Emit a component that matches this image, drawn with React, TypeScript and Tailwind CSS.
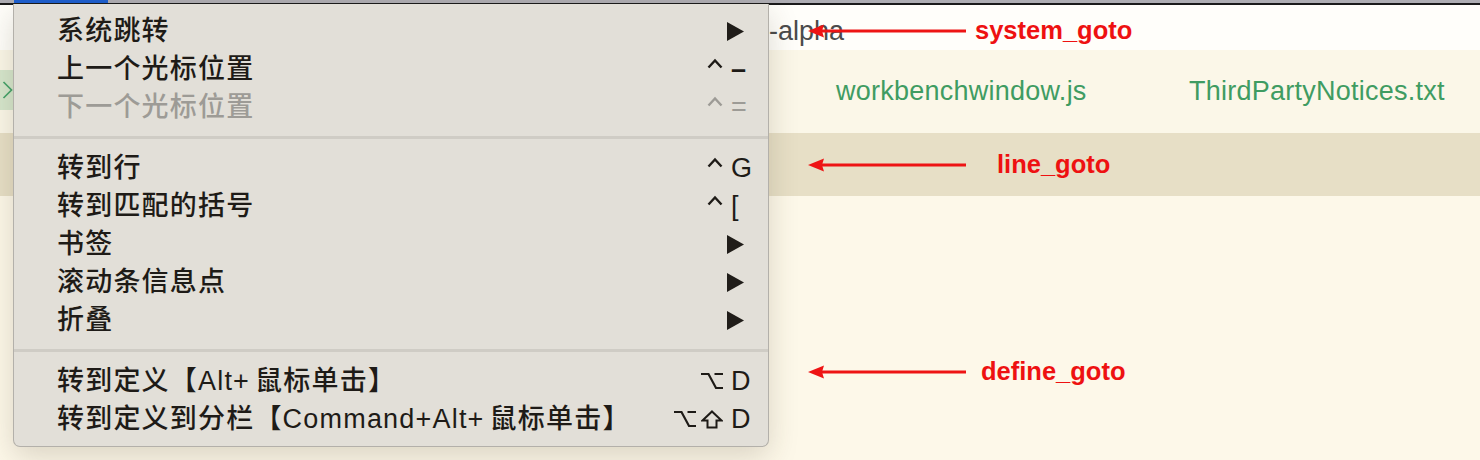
import React from 'react'

type Item = {
  label: string
  disabled?: boolean
  submenu?: boolean
  mods?: ('ctrl' | 'opt' | 'shift')[]
  keyChar?: string
}

const sections: Item[][] = [
  [
    { label: '系统跳转', submenu: true },
    { label: '上一个光标位置', mods: ['ctrl'], keyChar: '–' },
    { label: '下一个光标位置', mods: ['ctrl'], keyChar: '=', disabled: true },
  ],
  [
    { label: '转到行', mods: ['ctrl'], keyChar: 'G' },
    { label: '转到匹配的括号', mods: ['ctrl'], keyChar: '[' },
    { label: '书签', submenu: true },
    { label: '滚动条信息点', submenu: true },
    { label: '折叠', submenu: true },
  ],
  [
    { label: '转到定义【Alt+鼠标单击】', mods: ['opt'], keyChar: 'D' },
    { label: '转到定义到分栏【Command+Alt+鼠标单击】', mods: ['opt', 'shift'], keyChar: 'D' },
  ],
]

function ModIcon({ kind, color }: { kind: 'ctrl' | 'opt' | 'shift'; color: string }) {
  if (kind === 'ctrl') {
    return (
      <svg width="16" height="24" viewBox="0 0 16 24">
        <path d="M1.5 10.5 L8 3.5 L14.5 10.5" fill="none" stroke={color} strokeWidth="2.4" />
      </svg>
    )
  }
  if (kind === 'opt') {
    return (
      <svg width="22" height="18" viewBox="0 0 22 18">
        <path d="M0 2 H7.5 L15 16 H22 M13.5 2 H22" fill="none" stroke={color} strokeWidth="2.2" />
      </svg>
    )
  }
  return (
    <svg width="22" height="19" viewBox="0 0 22 19">
      <path d="M11 1.5 L20.5 10.5 H15.5 V17.5 H6.5 V10.5 H1.5 Z" fill="none" stroke={color} strokeWidth="2" />
    </svg>
  )
}

function Annotation({ label, gap }: { label: string; gap: string }) {
  return (
    <div className="flex h-[30px] items-center">
      <svg width="160" height="16" viewBox="0 0 160 16" className="shrink-0">
        <polygon points="0,8 16,1.5 14,8 16,14.5" fill="#ee1414" />
        <rect x="12" y="6.5" width="146" height="3" fill="#ee1414" />
      </svg>
      <span className={`${gap} text-[25.5px] font-bold leading-none text-[#ee1111]`}>{label}</span>
    </div>
  )
}

function MenuRow({ item }: { item: Item }) {
  const color = item.disabled ? '#9d9b96' : '#1e1b17'
  // a little breathing room between the latin "+" and the following CJK text
  const parts = item.label.split(/(?<=\+)(?=鼠)/)
  return (
    <div className="flex h-[38px] items-center pl-[43px] pr-[17px]">
      <span
        className={`flex-1 text-[27px] font-medium leading-none tracking-[1.2px] ${
          item.disabled ? 'text-[#9d9b96]' : 'text-[#1e1b17]'
        }`}
      >
        {parts.length > 1 ? (
          <>
            <span className="mr-[5px]">{parts[0]}</span>
            {parts[1]}
          </>
        ) : (
          item.label
        )}
      </span>
      {item.submenu && (
        <svg width="17" height="19" viewBox="0 0 17 19" className="mr-[7px]">
          <polygon points="0,0 17,9.5 0,19" fill="#201d19" />
        </svg>
      )}
      {item.mods && (
        <>
          <div className="flex items-center gap-[5px]">
            {item.mods.map((m) => (
              <ModIcon key={m} kind={m} color={color} />
            ))}
          </div>
          <span
            className={`ml-[8px] w-[20px] text-[27px] leading-none ${
              item.keyChar === '–' ? 'font-bold' : ''
            } ${item.disabled ? 'text-[#9d9b96]' : 'text-[#1e1b17]'}`}
          >
            {item.keyChar}
          </span>
        </>
      )}
    </div>
  )
}

export default function App() {
  return (
    <div className="relative h-[460px] w-[1480px] overflow-hidden bg-[#fdf8e9] font-['Liberation_Sans','Noto_Sans_CJK_SC',sans-serif]">
      {/* menu bar strip */}
      <div className="flex h-[3px] bg-[#aeadb3]">
        <div className="ml-[14px] w-[94px] bg-[#1d5fd0]" />
      </div>
      <div className="h-[2px] bg-[#1a1a1a]" />

      {/* title row */}
      <div className="flex h-[45px] items-center bg-[#fffefa] pl-[769px] pt-[7px]">
        <div className="grid">
          <span className="col-start-1 row-start-1 self-center text-[27px] leading-none text-[#4b4b4b]">-alpha</span>
          <div className="col-start-1 row-start-1 ml-[39px]">
            <Annotation label="system_goto" gap="ml-[7px]" />
          </div>
        </div>
      </div>

      {/* file row */}
      <div className="flex h-[83px] bg-[#fbf7e8]">
        <div className="w-[13px]">
          <div className="mt-[20px] flex h-[40px] items-center bg-[#d6e6cc] pl-[2px]">
            <svg width="11" height="18" viewBox="0 0 11 18">
              <path d="M1.5 1 L9.5 9 L1.5 17" fill="none" stroke="#46a36a" strokeWidth="1.7" />
            </svg>
          </div>
        </div>
        <div className="flex items-center pl-[823px] text-[27px] leading-none tracking-[0.25px] text-[#3f9c62]">
          <span className="w-[353px]">workbenchwindow.js</span>
          <span>ThirdPartyNotices.txt</span>
        </div>
      </div>

      {/* current line */}
      <div className="flex h-[63px] items-center bg-[#e7dfc6] pl-[808px]">
        <Annotation label="line_goto" gap="ml-[29px]" />
      </div>

      {/* rest */}
      <div className="pl-[808px] pt-[161px]">
        <Annotation label="define_goto" gap="ml-[13px]" />
      </div>

      {/* open menu */}
      <div className="absolute left-[13px] top-[4px] w-[756px] rounded-b-[7px] border-x border-b border-[#b3b0aa] bg-[#e2dfd8] py-[8px] shadow-[0_10px_30px_rgba(60,50,30,0.18)]">
        {sections.map((sec, i) => (
          <div key={i}>
            {i > 0 && (
              <div className="py-[10px]">
                <div className="h-[3px] bg-[#cfccc5]" />
              </div>
            )}
            {sec.map((item) => (
              <MenuRow key={item.label} item={item} />
            ))}
          </div>
        ))}
      </div>
    </div>
  )
}
